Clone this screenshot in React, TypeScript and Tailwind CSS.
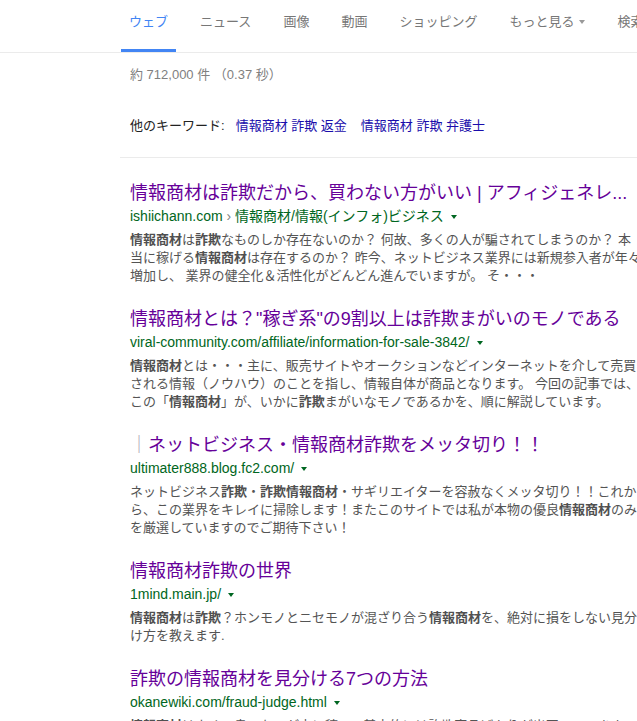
import React from "react";

const Tri = ({ color }: { color: string }) => (
  <span
    className="inline-block align-middle ml-[7px] w-0 h-0 border-l-[3.5px] border-r-[3.5px] border-t-[4px] border-l-transparent border-r-transparent"
    style={{ borderTopColor: color }}
  />
);

type Part = string | { b: string };

const Snippet = ({ parts }: { parts: Part[] }) => (
  <div className="mt-[3px] w-[512px] text-[13px] leading-[18px] text-[#545454]">
    {parts.map((p, i) =>
      typeof p === "string" ? (
        <span key={i}>{p}</span>
      ) : (
        <b key={i} className="font-bold text-[#505050]">
          {p.b}
        </b>
      )
    )}
  </div>
);

const Result = ({
  title,
  url,
  parts,
}: {
  title: React.ReactNode;
  url: React.ReactNode;
  parts: Part[];
}) => (
  <div className="mb-[23px]">
    <div className="text-[18px] leading-[22px] text-[#660099] whitespace-nowrap">{title}</div>
    <div className="text-[14px] leading-[24px] text-[#006621] whitespace-nowrap">
      {url}
      <Tri color="#006621" />
    </div>
    <Snippet parts={parts} />
  </div>
);

export default function App() {
  const tabs = ["ニュース", "画像", "動画", "ショッピング"];
  return (
    <div className="w-[637px] h-[721px] overflow-hidden bg-white font-['Liberation_Sans','Noto_Sans_CJK_JP',sans-serif]">
      {/* tab bar */}
      <div className="h-[53px] border-b border-[#ebebeb] pl-[121px] flex gap-4 whitespace-nowrap">
        <div className="px-2 pt-[12px] flex flex-col justify-between">
          <div className="text-[13px] leading-[20px] text-[#4285f4]">ウェブ</div>
          <div className="h-[3px] bg-[#4285f4] -mx-2" />
        </div>
        {tabs.map((t) => (
          <div key={t} className="px-2 pt-[12px]">
            <div className="text-[13px] leading-[20px] text-[#777]">{t}</div>
          </div>
        ))}
        <div className="px-2 pt-[12px]">
          <div className="text-[13px] leading-[20px] text-[#777] flex items-center">
            もっと見る
            <span className="inline-block ml-[5px] w-0 h-0 border-l-[3.5px] border-r-[3.5px] border-t-[4px] border-l-transparent border-r-transparent border-t-[#999]" />
          </div>
        </div>
        <div className="px-2 pt-[12px]">
          <div className="text-[13px] leading-[20px] text-[#777]">検索ツール</div>
        </div>
      </div>

      {/* stats */}
      <div className="pl-[130px] mt-[12px] text-[13px] leading-[20px] text-[#808080] whitespace-nowrap">
        約 712,000 件 （0.37 秒）
      </div>

      {/* other keywords */}
      <div className="pl-[130px] mt-[31px] text-[13px] leading-[20px] whitespace-nowrap flex">
        <span className="text-[#222]">他のキーワード:</span>
        <span className="ml-[11px] text-[#1a0dab]">情報商材 詐欺 返金</span>
        <span className="ml-[14px] text-[#1a0dab]">情報商材 詐欺 弁護士</span>
      </div>

      <div className="ml-[120px] mt-[21px] border-t border-[#ebebeb]" />

      {/* results */}
      <div className="pl-[130px] mt-[24px]">
        <Result
          title="情報商材は詐欺だから、買わない方がいい | アフィジェネレ..."
          url={
            <>
              ishiichann.com <span className="text-[#808080]">›</span> 情報商材/情報(インフォ)ビジネス
            </>
          }
          parts={[
            { b: "情報商材" },
            "は",
            { b: "詐欺" },
            "なものしか存在ないのか？ 何故、多くの人が騙されてしまうのか？ 本当に稼げる",
            { b: "情報商材" },
            "は存在するのか？ 昨今、ネットビジネス業界には新規参入者が年々増加し、 業界の健全化＆活性化がどんどん進んでいますが。 そ・・・",
          ]}
        />
        <Result
          title={'情報商材とは？"稼ぎ系"の9割以上は詐欺まがいのモノである'}
          url="viral-community.com/affiliate/information-for-sale-3842/"
          parts={[
            { b: "情報商材" },
            "とは・・・主に、販売サイトやオークションなどインターネットを介して売買される情報（ノウハウ）のことを指し、情報自体が商品となります。 今回の記事では、この「",
            { b: "情報商材" },
            "」が、いかに",
            { b: "詐欺" },
            "まがいなモノであるかを、順に解説しています。",
          ]}
        />
        <Result
          title={
            <>
              <span className="text-[#a8a0b0]">｜</span>ネットビジネス・情報商材詐欺をメッタ切り！！
            </>
          }
          url="ultimater888.blog.fc2.com/"
          parts={[
            "ネットビジネス",
            { b: "詐欺" },
            "・",
            { b: "詐欺情報商材" },
            "・サギリエイターを容赦なくメッタ切り！！これから、この業界をキレイに掃除します！またこのサイトでは私が本物の優良",
            { b: "情報商材" },
            "のみを厳選していますのでご期待下さい！",
          ]}
        />
        <Result
          title="情報商材詐欺の世界"
          url="1mind.main.jp/"
          parts={[
            { b: "情報商材" },
            "は",
            { b: "詐欺" },
            "？ホンモノとニセモノが混ざり合う",
            { b: "情報商材" },
            "を、絶対に損をしない見分け方を教えます.",
          ]}
        />
        <Result
          title="詐欺の情報商材を見分ける7つの方法"
          url="okanewiki.com/fraud-judge.html"
          parts={[
            { b: "情報商材" },
            "はよくの良いものが宝に稼て、基本的には詐欺商品ばかりが出回っています。",
          ]}
        />
      </div>
    </div>
  );
}
